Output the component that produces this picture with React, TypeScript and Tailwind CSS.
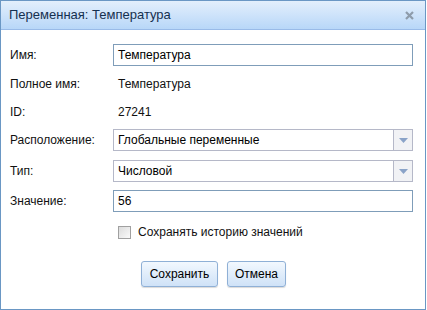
import React from 'react';

const font = { fontFamily: '"Liberation Sans", Arial, sans-serif' };

const Label = ({ children }: { children: React.ReactNode }) => (
  <div className="w-[103px] shrink-0 text-[12px] text-[#111]">{children}</div>
);

const TextInput = ({ value }: { value: string }) => (
  <div className="flex h-[22px] w-[300px] items-center border border-[#7f9db9] bg-white px-[4px] text-[12px] text-black">
    {value}
  </div>
);

const Select = ({ value }: { value: string }) => (
  <div className="flex h-[22px] w-[300px] border border-[#b5b8c8] bg-white text-[12px] text-black">
    <div className="flex flex-1 items-center px-[4px]">{value}</div>
    <div className="flex w-[19px] items-center justify-center border-l border-[#b5b8c8] bg-[#f1f2f5]">
      <svg width="9" height="5" viewBox="0 0 9 5">
        <path d="M0 0 H9 L4.5 5 Z" fill="#8aa3c8" />
      </svg>
    </div>
  </div>
);

const Button = ({ children, w }: { children: React.ReactNode; w: string }) => (
  <button className={`h-[26px] ${w} rounded-[3px] border border-[#8fb0d6] bg-gradient-to-b from-[#f2f8fe] to-[#cfe2f7] text-[12px] text-black shadow-[0_1px_1px_rgba(0,0,0,0.15)]`}>
    {children}
  </button>
);

export default function App() {
  return (
    <div style={font} className="flex h-[310px] w-[427px] flex-col bg-white">
      <div className="flex h-full w-[426px] flex-col border border-[#6a97c4]">
        {/* header */}
        <div className="flex h-[29px] shrink-0 items-center justify-between border-b border-[#99bbe8] bg-gradient-to-b from-[#e3effc] to-[#b8d7f8] pl-[8px] pr-[11px]">
          <span className="text-[13px] text-[#15304f]">Переменная: Температура</span>
          <svg width="9" height="9" viewBox="0 0 9 9">
            <path d="M1 1 L8 8 M8 1 L1 8" stroke="#8e9cab" strokeWidth="2.2" />
          </svg>
        </div>

        {/* body */}
        <div className="flex flex-1 flex-col pl-[9px] pt-[14px]">
          <div className="flex h-[22px] items-center">
            <Label>Имя:</Label>
            <TextInput value="Температура" />
          </div>
          <div className="mt-[7px] flex h-[22px] items-center">
            <Label>Полное имя:</Label>
            <span className="pl-[5px] text-[12px] text-[#111]">Температура</span>
          </div>
          <div className="mt-[6px] flex h-[22px] items-center">
            <Label>ID:</Label>
            <span className="pl-[5px] text-[12px] text-[#111]">27241</span>
          </div>
          <div className="mt-[6px] flex h-[22px] items-center">
            <Label>Расположение:</Label>
            <Select value="Глобальные переменные" />
          </div>
          <div className="mt-[9px] flex h-[22px] items-center">
            <Label>Тип:</Label>
            <Select value="Числовой" />
          </div>
          <div className="mt-[8px] flex h-[22px] items-center">
            <Label>Значение:</Label>
            <TextInput value="56" />
          </div>

          <div className="mt-[11px] flex items-center pl-[108px]">
            <div className="h-[13px] w-[13px] border border-[#a0a0a0] bg-gradient-to-br from-[#dcdcdc] to-[#fafafa]" />
            <span className="ml-[7px] text-[12px] text-[#111]">Сохранять историю значений</span>
          </div>

          <div className="mt-[20px] flex gap-[9px] pl-[131px]">
            <Button w="w-[77px]">Сохранить</Button>
            <Button w="w-[59px]">Отмена</Button>
          </div>
        </div>
      </div>
    </div>
  );
}
